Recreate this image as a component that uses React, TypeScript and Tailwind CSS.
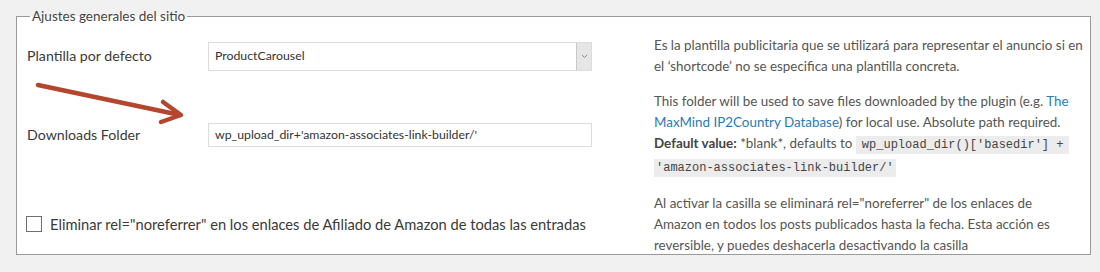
export default function App() {
  return (
    <div className="w-[1100px] h-[272px] bg-[#f1f1f1] pt-[6px] pl-[16px] font-['Lato','Liberation_Sans',sans-serif] relative overflow-hidden">
      <fieldset className="w-[1075px] h-[249px] border border-[#9a9a9a] bg-white">
        <legend className="ml-[13px] px-[2px] text-[13.5px] leading-[20px] text-[#444]">
          Ajustes generales del sitio
        </legend>

        <div className="flex flex-col gap-[14px] pt-[9px] pl-[10px]">
          {/* plantilla */}
          <div className="flex items-center">
            <div className="w-[181px] text-[14.2px] text-[#3a3a3a]">Plantilla por defecto</div>
            <div className="w-[384px] h-[29px] flex border border-[#dcdcdc] bg-white">
              <div className="flex-1 flex items-center pl-[6px] text-[12.3px] text-[#333]">ProductCarousel</div>
              <div className="w-[15px] border-l border-[#c8c8c8] bg-[#e6e6e6] flex items-center justify-center">
                <svg width="7" height="5" viewBox="0 0 7 5">
                  <path d="M1 1 L3.5 3.5 L6 1" fill="none" stroke="#888" strokeWidth="1" />
                </svg>
              </div>
            </div>
            <p className="ml-[62px] w-[425px] whitespace-nowrap text-[13.4px] leading-[21px] text-[#555]">
              Es la plantilla publicitaria que se utilizará para representar el anuncio si en
              <br />
              el ‘shortcode’ no se especifica una plantilla concreta.
            </p>
          </div>

          {/* downloads folder */}
          <div className="flex items-center">
            <div className="w-[181px] text-[14.2px] text-[#3a3a3a]">Downloads Folder</div>
            <div className="w-[384px] h-[24px] flex items-center border border-[#dcdcdc] pl-[6px] text-[12.3px] text-[#333]">
              wp_upload_dir+'amazon-associates-link-builder/'
            </div>
            <p className="ml-[62px] w-[425px] whitespace-nowrap text-[13.4px] leading-[21px] text-[#555]">
              This folder will be used to save files downloaded by the plugin (e.g.{' '}
              <a className="text-[#2a7ab8]">The</a>
              <br />
              <a className="text-[#2a7ab8]">MaxMind IP2Country Database</a>) for local use. Absolute path required.
              <br />
              <b className="font-bold text-[#444]">Default value:</b> *blank*, defaults to{' '}
              <code className="bg-[#ececec] px-[6px] py-[2px] font-['Liberation_Mono',monospace] text-[12px] text-[#444]">
                wp_upload_dir()['basedir'] +
              </code>
              <br />
              <code className="bg-[#ececec] px-[2px] py-[2px] font-['Liberation_Mono',monospace] text-[12px] text-[#444]">
                'amazon-associates-link-builder/'
              </code>
            </p>
          </div>

          {/* checkbox */}
          <div className="flex items-center">
            <div className="w-[565px] flex items-center">
              <span className="ml-[-1px] w-[16px] h-[16px] border border-[#6f6f6f] bg-white" />
              <span className="ml-[8px] whitespace-nowrap text-[14.7px] text-[#3a3a3a]">
                Eliminar rel="noreferrer" en los enlaces de Afiliado de Amazon de todas las entradas
              </span>
            </div>
            <p className="ml-[62px] w-[425px] whitespace-nowrap text-[13.4px] leading-[21px] text-[#555]">
              Al activar la casilla se eliminará rel="noreferrer" de los enlaces de
              <br />
              Amazon en todos los posts publicados hasta la fecha. Esta acción es
              <br />
              reversible, y puedes deshacerla desactivando la casilla
            </p>
          </div>
        </div>
      </fieldset>

      {/* red annotation arrow */}
      <svg className="absolute left-0 top-0" width="200" height="140" viewBox="0 0 200 140">
        <g stroke="#b4462e" strokeWidth="4.5" strokeLinecap="round" strokeLinejoin="round" fill="none">
          <path d="M38 85 L180 115" />
          <path d="M163 102 L181 115 L161 122" />
        </g>
      </svg>
    </div>
  );
}
